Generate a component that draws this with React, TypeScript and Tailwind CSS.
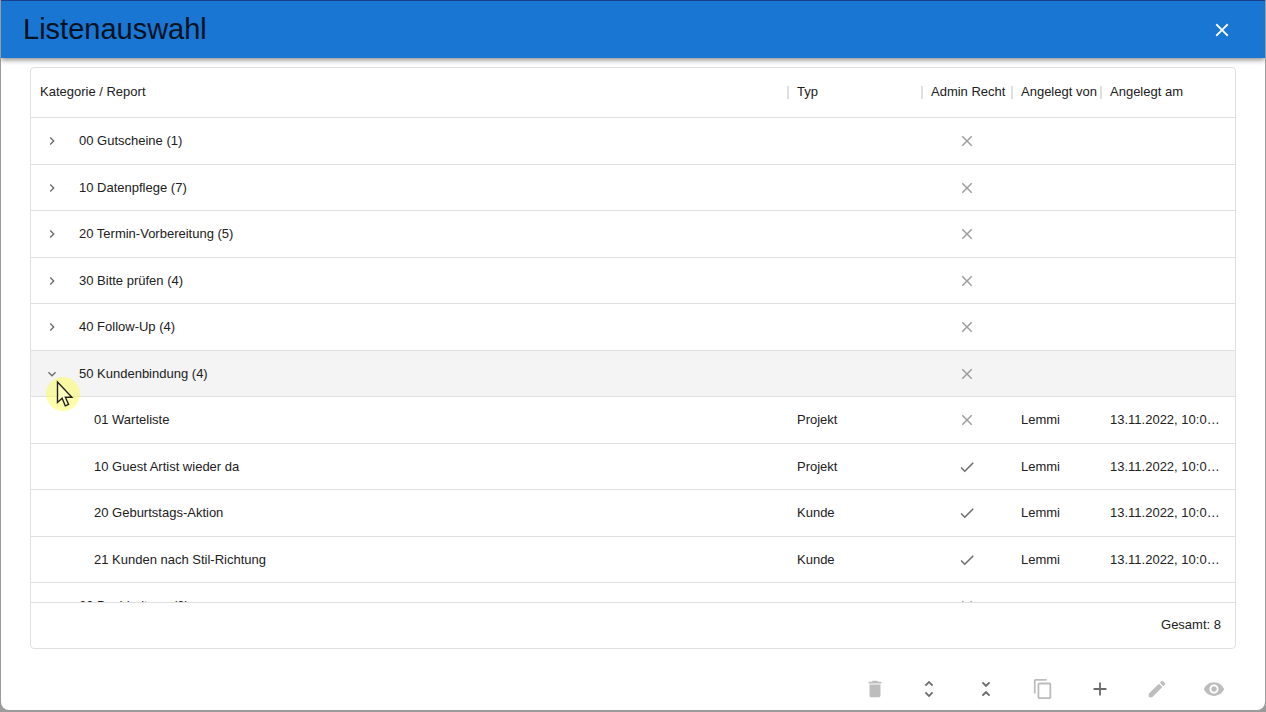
import { useState } from "react";
import {
  MdAdd,
  MdCheck,
  MdClose,
  MdContentCopy,
  MdDelete,
  MdEdit,
  MdKeyboardArrowDown,
  MdKeyboardArrowRight,
  MdUnfoldLess,
  MdUnfoldMore,
  MdVisibility,
} from "react-icons/md";
import clsx from "clsx";

type Report = {
  name: string;
  type: string;
  admin: boolean;
  createdBy: string;
  createdAt: string;
};

type Category = {
  name: string;
  count: number;
  reports: Report[];
};

const CREATED_AT = "13.11.2022, 10:00:00";

const categories: Category[] = [
  { name: "00 Gutscheine", count: 1, reports: [] },
  { name: "10 Datenpflege", count: 7, reports: [] },
  { name: "20 Termin-Vorbereitung", count: 5, reports: [] },
  { name: "30 Bitte prüfen", count: 4, reports: [] },
  { name: "40 Follow-Up", count: 4, reports: [] },
  {
    name: "50 Kundenbindung",
    count: 4,
    reports: [
      { name: "01 Warteliste", type: "Projekt", admin: false, createdBy: "Lemmi", createdAt: CREATED_AT },
      { name: "10 Guest Artist wieder da", type: "Projekt", admin: true, createdBy: "Lemmi", createdAt: CREATED_AT },
      { name: "20 Geburtstags-Aktion", type: "Kunde", admin: true, createdBy: "Lemmi", createdAt: CREATED_AT },
      { name: "21 Kunden nach Stil-Richtung", type: "Kunde", admin: true, createdBy: "Lemmi", createdAt: CREATED_AT },
    ],
  },
  { name: "60 Buchhaltung", count: 3, reports: [] },
  { name: "70 Auswertungen", count: 6, reports: [] },
];

const rowClass = "odd:h-[47px] even:h-[46px]";
const cellClass = "border-b border-[#e0e0e0] px-[9px] truncate";

function HeaderCell({ label }: { label: string }) {
  return (
    <th
      scope="col"
      className="group relative h-[50px] border-b border-[#e0e0e0] px-[9px] pb-[2px] text-left font-normal whitespace-nowrap"
    >
      {label}
      <span className="absolute top-[18px] -right-px h-[13px] w-[2px] bg-[#e0e0e0] group-last:hidden" />
    </th>
  );
}

function AdminIcon({ value }: { value: boolean }) {
  return value ? (
    <MdCheck title="Ja" className="mx-auto size-[18px] text-[#6b6b6b]" />
  ) : (
    <MdClose title="Nein" className="mx-auto size-[18px] text-[#9e9e9e]" />
  );
}

function CategoryRow({
  category,
  open,
  onToggle,
}: {
  category: Category;
  open: boolean;
  onToggle: () => void;
}) {
  const Arrow = open ? MdKeyboardArrowDown : MdKeyboardArrowRight;

  return (
    <tr className={clsx(rowClass, open && "bg-[#f4f4f4]")}>
      <td className={cellClass}>
        <div className="flex items-center">
          <button
            type="button"
            onClick={onToggle}
            aria-expanded={open}
            aria-label={category.name}
            className="mr-4 flex h-6 w-[23px] items-center justify-center text-[#6b6b6b]"
          >
            <Arrow className="size-4" />
          </button>
          {category.name} ({category.count})
        </div>
      </td>
      <td className={cellClass} />
      <td className={cellClass}>
        <AdminIcon value={false} />
      </td>
      <td className={cellClass} />
      <td className={cellClass} />
    </tr>
  );
}

function ReportRow({ report }: { report: Report }) {
  return (
    <tr className={rowClass}>
      <td className={cellClass}>
        <div className="pl-[54px]">{report.name}</div>
      </td>
      <td className={cellClass}>{report.type}</td>
      <td className={cellClass}>
        <AdminIcon value={report.admin} />
      </td>
      <td className={cellClass}>{report.createdBy}</td>
      <td className={cellClass}>{report.createdAt}</td>
    </tr>
  );
}

const toolClass =
  "flex size-9 items-center justify-center text-[#6b6b6b] disabled:text-[#bdbdbd]";

function MousePointer() {
  return (
    <div className="pointer-events-none absolute top-[377px] left-[45px] size-[34px] rounded-full bg-[#fbfb55]/50">
      <svg viewBox="0 0 34 34" className="size-full">
        <path
          d="M11.5 5v20.5l4.6-4.3 3.2 7.6 3.3-1.4-3.2-7.2h6.5z"
          fill="#ffffc0"
          stroke="#222"
          strokeWidth="1.4"
        />
      </svg>
    </div>
  );
}

export default function App() {
  const [expanded, setExpanded] = useState<string[]>(["50 Kundenbindung"]);

  const toggle = (name: string) => {
    setExpanded((prev) =>
      prev.includes(name) ? prev.filter((n) => n !== name) : [...prev, name]
    );
  };

  return (
    <div className="h-screen bg-[#9b9b9b] px-px pb-[2px] font-['Liberation_Sans',Arial,sans-serif] text-[13px] text-[#212121]">
      <div
        role="dialog"
        aria-labelledby="dialog-title"
        className="relative flex h-full flex-col overflow-hidden rounded-b-lg bg-white"
      >
        <header className="z-10 flex h-[58px] shrink-0 items-center justify-between border-t border-[#17408b] bg-[#1976d2] pr-[25px] pl-[22px] shadow-[0_2px_5px_rgba(0,0,0,0.45)]">
          <h1 id="dialog-title" className="text-[29px] leading-[45px] text-[#06121f]">
            Listenauswahl
          </h1>
          <button
            type="button"
            aria-label="Schließen"
            className="flex size-9 items-center justify-center text-white"
          >
            <MdClose className="size-[22px]" />
          </button>
        </header>

        <main className="flex min-h-0 flex-1 flex-col px-[29px] pt-[9px]">
          <div className="flex min-h-0 flex-1 flex-col overflow-hidden rounded border border-[#e0e0e0]">
            <div className="min-h-0 flex-1 overflow-hidden">
              <table className="w-full table-fixed border-separate border-spacing-0">
                <colgroup>
                  <col />
                  <col className="w-[134px]" />
                  <col className="w-[90px]" />
                  <col className="w-[89px]" />
                  <col className="w-[134px]" />
                </colgroup>
                <thead>
                  <tr>
                    <HeaderCell label="Kategorie / Report" />
                    <HeaderCell label="Typ" />
                    <HeaderCell label="Admin Recht" />
                    <HeaderCell label="Angelegt von" />
                    <HeaderCell label="Angelegt am" />
                  </tr>
                </thead>
                <tbody>
                  {categories.flatMap((category) => {
                    const open = expanded.includes(category.name);
                    return [
                      <CategoryRow
                        key={category.name}
                        category={category}
                        open={open}
                        onToggle={() => toggle(category.name)}
                      />,
                      ...(open
                        ? category.reports.map((report) => (
                            <ReportRow
                              key={category.name + report.name}
                              report={report}
                            />
                          ))
                        : []),
                    ];
                  })}
                </tbody>
              </table>
            </div>
            <div className="flex h-[46px] shrink-0 items-center justify-end border-t border-[#e0e0e0] pr-[14px] pb-[2px]">
              Gesamt: {categories.length}
            </div>
          </div>
        </main>

        <footer className="flex shrink-0 justify-end gap-[18px] pt-[22px] pr-[33px] pb-[3px]">
          <button type="button" aria-label="Löschen" disabled className={toolClass}>
            <MdDelete className="size-[22px]" />
          </button>
          <div className="flex gap-[21px]">
            <button
              type="button"
              aria-label="Alle aufklappen"
              className={toolClass}
              onClick={() => setExpanded(categories.map((c) => c.name))}
            >
              <MdUnfoldMore className="size-[22px]" />
            </button>
            <button
              type="button"
              aria-label="Alle zuklappen"
              className={toolClass}
              onClick={() => setExpanded([])}
            >
              <MdUnfoldLess className="size-[22px]" />
            </button>
            <button type="button" aria-label="Kopieren" disabled className={toolClass}>
              <MdContentCopy className="size-[22px]" />
            </button>
            <button type="button" aria-label="Neu" className={toolClass}>
              <MdAdd className="size-[22px]" />
            </button>
            <button type="button" aria-label="Bearbeiten" disabled className={toolClass}>
              <MdEdit className="size-[22px]" />
            </button>
            <button type="button" aria-label="Anzeigen" disabled className={toolClass}>
              <MdVisibility className="size-[22px]" />
            </button>
          </div>
        </footer>

        <MousePointer />
      </div>
    </div>
  );
}
